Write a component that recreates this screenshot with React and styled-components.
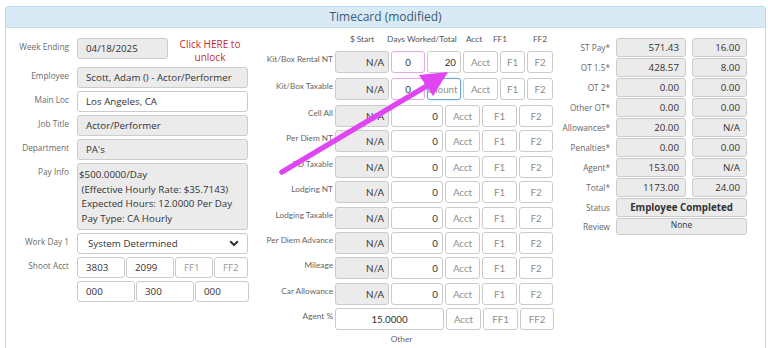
import React from 'react';
import styled, { createGlobalStyle, css } from 'styled-components';

const GlobalStyle = createGlobalStyle`
  html, body {
    margin: 0;
    padding: 0;
    background: #fff;
    overflow: hidden;
  }
  body {
    font-family: "Open Sans", "Liberation Sans", sans-serif;
    color: #333;
  }
`;

const payInfo = ['$500.0000/Day', ' (Effective Hourly Rate: $35.7143)', ' Expected Hours: 12.0000 Per Day', ' Pay Type: CA Hourly'];

const allowances = [
  ['Cell All', '0'],
  ['Per Diem NT', '0'],
  ['PD Taxable', '0'],
  ['Lodging NT', '0'],
  ['Lodging Taxable', '0'],
  ['Per Diem Advance', '0'],
  ['Mileage', '0'],
  ['Car Allowance', '0'],
];

const totals = [
  ['ST Pay*', '571.43', '16.00'],
  ['OT 1.5*', '428.57', '8.00'],
  ['OT 2*', '0.00', '0.00'],
  ['Other OT*', '0.00', '0.00'],
  ['Allowances*', '20.00', 'N/A'],
  ['Penalties*', '0.00', '0.00'],
  ['Agent*', '153.00', 'N/A'],
  ['Total*', '1173.00', '24.00'],
];

const Arrow = () => (
  <ArrowLayer viewBox="0 0 768 348" width="768" height="348">
    <line x1="282" y1="172" x2="430" y2="84" stroke="#df45f2" strokeWidth="5.5" strokeLinecap="round" />
    <polygon points="448,72 419,75 433,96" fill="#df45f2" />
  </ArrowLayer>
);

const App = () => (
  <Page>
    <GlobalStyle />
    <Panel>
      <Header>Timecard (modified)</Header>
      <Body>
        <LeftCol>
          <FieldRow $first>
            <Label>Week Ending</Label>
            <Field $w={91} $grey>04/18/2025</Field>
            <Unlock>Click HERE to<br />unlock</Unlock>
          </FieldRow>
          <FieldRow>
            <Label>Employee</Label>
            <Field $grey>Scott, Adam () - Actor/Performer</Field>
          </FieldRow>
          <FieldRow>
            <Label>Main Loc</Label>
            <Field>Los Angeles, CA</Field>
          </FieldRow>
          <FieldRow>
            <Label>Job Title</Label>
            <Field $grey>Actor/Performer</Field>
          </FieldRow>
          <FieldRow>
            <Label>Department</Label>
            <Field $grey>PA's</Field>
          </FieldRow>
          <FieldRow>
            <Label>Pay Info</Label>
            <PayBox>
              {payInfo.map((l) => <div key={l}>{l}</div>)}
            </PayBox>
          </FieldRow>
          <FieldRow>
            <Label>Work Day 1</Label>
            <Select>
              <span>System Determined</span>
              <svg width="10" height="7" viewBox="0 0 10 7">
                <path d="M1.2 1.2 L5 5 L8.8 1.2" fill="none" stroke="#333" strokeWidth="2" />
              </svg>
            </Select>
          </FieldRow>
          <FieldRow>
            <Label>Shoot Acct</Label>
            <Split>
              <Field $w={48}>3803</Field>
              <Field $w={48}>2099</Field>
              <Field $w={38} $ph>FF1</Field>
              <Field $w={34} $ph>FF2</Field>
            </Split>
          </FieldRow>
          <FieldRow>
            <Label />
            <Split>
              <Field $w={58}>000</Field>
              <Field $w={58}>300</Field>
              <Field $w={54}>000</Field>
            </Split>
          </FieldRow>
        </LeftCol>

        <MidCol>
          <HeadRow>
            <HeadCell $w={50}>$ Start</HeadCell>
            <HeadCell $w={60}>Days Worked/Total</HeadCell>
            <HeadCell $w={28} $ml={13}>Acct</HeadCell>
            <HeadCell $w={24}>FF1</HeadCell>
            <HeadCell $w={28} $ml={14}>FF2</HeadCell>
          </HeadRow>
          <MidRow $kit>
            <RowLabel>Kit/Box Rental NT</RowLabel>
            <Cell $w={54} $grey>N/A</Cell>
            <Cell $w={34} $center $pink>0</Cell>
            <Cell $w={34}>20</Cell>
            <Cell $w={35} $center $ph>Acct</Cell>
            <Cell $w={25} $center $ph>F1</Cell>
            <Cell $w={26} $center $ph>F2</Cell>
          </MidRow>
          <MidRow $kit>
            <RowLabel>Kit/Box Taxable</RowLabel>
            <Cell $w={54} $grey>N/A</Cell>
            <Cell $w={34} $center $pink>0</Cell>
            <Cell $w={34} $focus $ph><Scrolled>Amount</Scrolled></Cell>
            <Cell $w={35} $center $ph>Acct</Cell>
            <Cell $w={25} $center $ph>F1</Cell>
            <Cell $w={26} $center $ph>F2</Cell>
          </MidRow>
          {allowances.map(([label, v]) => (
            <MidRow key={label}>
              <RowLabel>{label}</RowLabel>
              <Cell $w={54} $grey>N/A</Cell>
              <Cell $w={52}>{v}</Cell>
              <Cell $w={35} $center $ph>Acct</Cell>
              <Cell $w={35} $center $ph>F1</Cell>
              <Cell $w={34} $center $ph>F2</Cell>
            </MidRow>
          ))}
          <MidRow>
            <RowLabel>Agent %</RowLabel>
            <Cell $w={109} $center>15.0000</Cell>
            <Cell $w={35} $center $ph>Acct</Cell>
            <Cell $w={35} $center $ph>FF1</Cell>
            <Cell $w={34} $center $ph>FF2</Cell>
          </MidRow>
          <Other>Other</Other>
        </MidCol>

        <RightCol>
          {totals.map(([label, a, b]) => (
            <TotRow key={label}>
              <TotLabel>{label}</TotLabel>
              <TotBox $w={70}>{a}</TotBox>
              <TotBox $w={55}>{b}</TotBox>
            </TotRow>
          ))}
          <TotRow>
            <TotLabel>Status</TotLabel>
            <TotBox $w={131} $status>Employee Completed</TotBox>
          </TotRow>
          <TotRow>
            <TotLabel>Review</TotLabel>
            <TotBox $w={131} $review>None</TotBox>
          </TotRow>
        </RightCol>
      </Body>
    </Panel>
    <Arrow />
  </Page>
);

export default App;

const Page = styled.div`
  position: relative;
  width: 768px;
  height: 348px;
  overflow: hidden;
`;

const ArrowLayer = styled.svg`
  position: absolute;
  left: 0;
  top: 0;
  pointer-events: none;
`;

const Panel = styled.div`
  margin: 6px 0 0 5px;
  width: 759px;
  height: 400px;
  border: 1px solid #b6dbee;
  border-radius: 3px 3px 0 0;
`;

const Header = styled.div`
  height: 20px;
  background: #d9eaf5;
  border-bottom: 1px solid #c3e0f0;
  color: #3b5a78;
  font-size: 12px;
  line-height: 20px;
  text-align: center;
`;

const Body = styled.div`
  display: flex;
  align-items: flex-start;
  padding: 10px 0 0 3px;
`;

const LeftCol = styled.div`
  width: 239px;
  display: flex;
  flex-direction: column;
`;

const FieldRow = styled.div`
  display: flex;
  align-items: flex-start;
  gap: 8px;
  margin-bottom: 3px;
  ${(p) => p.$first && css`
    height: 26px;
  `}
`;

const Label = styled.div`
  width: 60px;
  flex-shrink: 0;
  padding-top: 3px;
  font-size: 8.25px;
  line-height: 12px;
  color: #6b6b6b;
  text-align: right;
`;

const boxBase = css`
  box-sizing: border-box;
  border: 1px solid #cbcbcb;
  border-radius: 3px;
  white-space: nowrap;
  overflow: hidden;
`;

const Field = styled.div`
  ${boxBase}
  width: ${(p) => p.$w || 171}px;
  height: 21px;
  padding: 0 8px;
  font-size: 9.75px;
  line-height: 19px;
  background: ${(p) => (p.$grey ? '#ebebeb' : '#fff')};
  color: ${(p) => (p.$ph ? '#9a9a9a' : '#333')};
`;

const Unlock = styled.div`
  flex: 1;
  margin-left: -4px;
  text-align: center;
  color: #c9272e;
  font-size: 10px;
  line-height: 13px;
`;

const PayBox = styled.div`
  ${boxBase}
  width: 171px;
  height: 67px;
  padding: 4px 1px 0;
  background: #ebebeb;
  font-size: 9.75px;
  line-height: 14.7px;
  white-space: pre;
`;

const Select = styled.div`
  ${boxBase}
  width: 171px;
  height: 21px;
  padding: 0 8px 0 10px;
  display: flex;
  align-items: center;
  justify-content: space-between;
  font-size: 9.75px;
  background: #fff;
`;

const Split = styled.div`
  display: flex;
  gap: 1px;
`;

const MidCol = styled.div`
  width: 307px;
  margin-top: -5px;
  display: flex;
  flex-direction: column;
  font-family: Lato, "Liberation Sans", sans-serif;
`;

const HeadRow = styled.div`
  display: flex;
  height: 13px;
  margin: 0 0 5px 89px;
  font-size: 8.25px;
  line-height: 13px;
  color: #555;
`;

const HeadCell = styled.div`
  width: ${(p) => p.$w}px;
  margin-left: ${(p) => p.$ml || 0}px;
  text-align: center;
  white-space: nowrap;
`;

const MidRow = styled.div`
  display: flex;
  align-items: flex-start;
  gap: 2px;
  height: 22px;
  margin-bottom: ${(p) => (p.$kit ? 5 : 3.4)}px;
`;

const RowLabel = styled.div`
  width: 85px;
  padding-top: 2px;
  font-size: 8.25px;
  line-height: 12px;
  color: #666;
  text-align: right;
  white-space: nowrap;
`;

const Cell = styled.div`
  ${boxBase}
  width: ${(p) => p.$w}px;
  height: 22px;
  padding: 0 4px;
  font-size: 9.75px;
  line-height: 20px;
  text-align: ${(p) => (p.$center ? 'center' : 'right')};
  background: ${(p) => (p.$grey ? '#ebebeb' : '#fff')};
  color: ${(p) => (p.$ph ? '#8e8e8e' : '#333')};
  ${(p) => p.$pink && css`
    border-color: #e7a8ef;
  `}
  ${(p) => p.$focus && css`
    border-color: #6aa9e0;
    box-shadow: 0 0 2px rgba(102, 175, 233, 0.6);
    text-align: left;
  `}
`;

const Scrolled = styled.span`
  display: inline-block;
  margin-left: -9px;
`;

const Other = styled.div`
  text-align: center;
  font-size: 8.25px;
  color: #666;
  line-height: 12px;
  margin-top: -1px;
`;

const RightCol = styled.div`
  display: flex;
  flex-direction: column;
`;

const TotRow = styled.div`
  display: flex;
  align-items: center;
  gap: 6px;
  margin-bottom: 1px;
`;

const TotLabel = styled.div`
  width: 55px;
  font-size: 8.25px;
  color: #666;
  text-align: right;
  white-space: nowrap;
`;

const TotBox = styled.div`
  ${boxBase}
  width: ${(p) => p.$w}px;
  height: ${(p) => (p.$review ? 17 : 19)}px;
  padding: 0 6px;
  background: #ebebeb;
  font-size: 9.75px;
  line-height: 17px;
  text-align: right;
  ${(p) => p.$status && css`
    text-align: center;
    font-weight: 700;
  `}
  ${(p) => p.$review && css`
    text-align: center;
    font-size: 8.5px;
    line-height: 12px;
  `}
`;
